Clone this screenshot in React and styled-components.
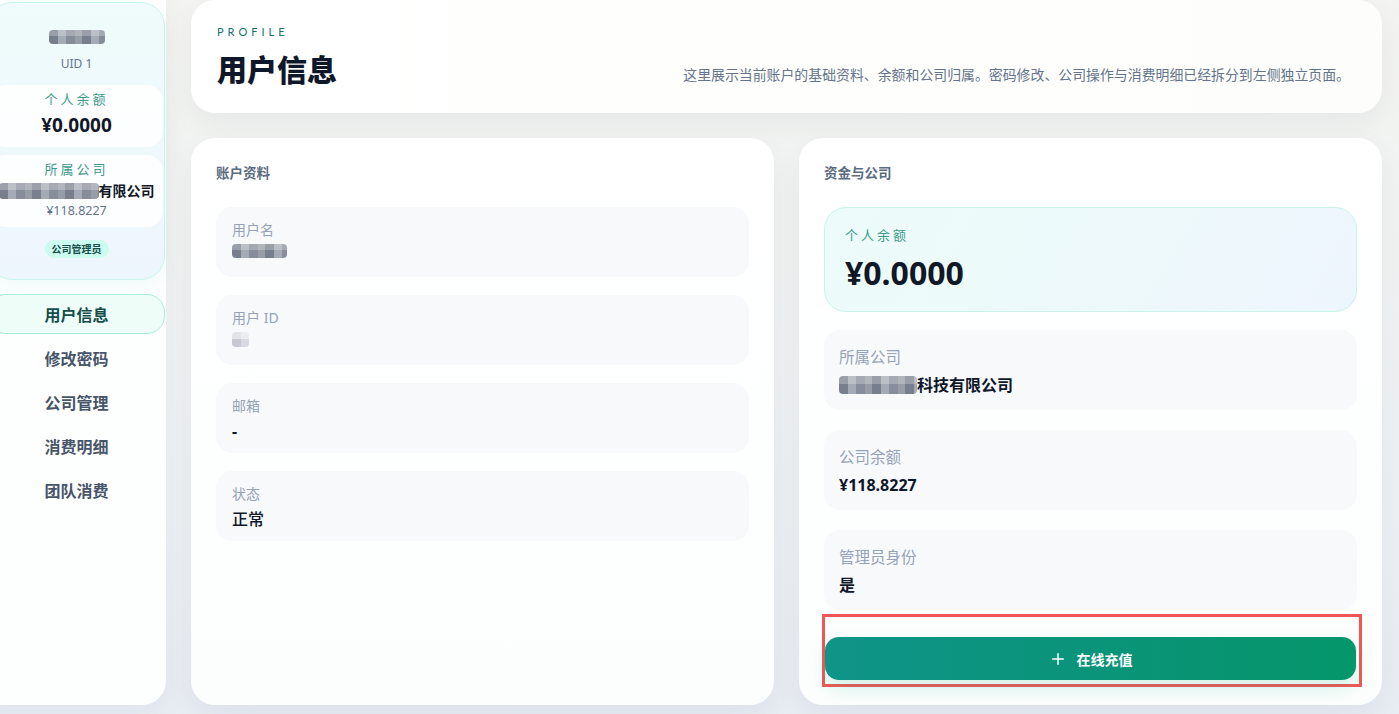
import React from 'react'
import styled, { createGlobalStyle } from 'styled-components'
import { Plus } from 'lucide-react'

const GlobalStyle = createGlobalStyle`
  * { box-sizing: border-box; }
  html, body { margin: 0; padding: 0; }
  body {
    font-family: "Noto Sans", "Noto Sans CJK SC", sans-serif;
    background: linear-gradient(180deg, #f3f4f1 0%, #eef1f3 60%, #e8ecf3 100%);
    color: #0f172a;
    overflow: hidden;
  }
`

const Page = styled.div`
  display: grid;
  grid-template-columns: 166px 1fr;
  column-gap: 25px;
  height: 100vh;
  padding: 0 17px 9px 0;
`

const Sidebar = styled.aside`
  margin: -20px 0 0 -24px;
  padding: 22px 1px 0 12px;
  background: linear-gradient(180deg, #ffffff, #fdfefe);
  border-radius: 0 24px 24px 0;
  box-shadow: 0 10px 30px rgba(15, 23, 42, 0.04);
  display: flex;
  flex-direction: column;
`

const ProfileCard = styled.div`
  border: 1px solid #c9f6ec;
  border-radius: 24px;
  background: linear-gradient(180deg, #effcfb 0%, #eef6fd 100%);
  padding: 27px 1px 21px;
  display: flex;
  flex-direction: column;
  align-items: center;
  box-shadow: 0 8px 20px rgba(20, 184, 166, 0.06);
`

const Redact = styled.span`
  display: inline-block;
  width: ${p => p.$w}px;
  height: ${p => p.$h}px;
  border-radius: 4px;
  flex-shrink: 0;
  background:
    linear-gradient(180deg, rgba(255, 255, 255, ${p => (p.$light ? 0.55 : 0.25)}) 0 45%, transparent 45%),
    repeating-linear-gradient(90deg, #6b7280 0 9px, #9ca3af 9px 17px, #7b8290 17px 26px, #8d939e 26px 33px);
  opacity: ${p => (p.$light ? 0.35 : 0.9)};
`

const Uid = styled.div`
  margin-top: 12px;
  font-size: 12px;
  line-height: 16px;
  color: #64748b;
`

const MiniBox = styled.div`
  align-self: stretch;
  margin-top: ${p => p.$mt}px;
  padding: 6px 0 ${p => p.$pb}px;
  border-radius: 16px;
  background: rgba(255, 255, 255, 0.85);
  display: flex;
  flex-direction: column;
  align-items: center;
`

const MiniLabel = styled.div`
  font-size: 13px;
  line-height: 16px;
  letter-spacing: 3px;
  color: #3d9a8b;
`

const MiniValue = styled.div`
  margin-top: 6px;
  font-size: 19px;
  line-height: 24px;
  font-weight: 700;
  color: #111827;
`

const MiniCompany = styled.div`
  margin-top: 4px;
  display: flex;
  align-items: center;
  font-size: 14px;
  line-height: 20px;
  font-weight: 700;
  color: #111827;
`

const MiniAmount = styled.div`
  margin-top: 1px;
  font-size: 12.5px;
  line-height: 18px;
  color: #64748b;
`

const Badge = styled.div`
  margin-top: 13px;
  padding: 0 7px;
  height: 18px;
  line-height: 18px;
  border-radius: 9px;
  background: #ccfbef;
  color: #134e4a;
  font-size: 10px;
  font-weight: 700;
`

const Nav = styled.nav`
  margin-top: 14px;
  display: flex;
  flex-direction: column;
  gap: 4px;
`

const NavItem = styled.div`
  height: 40px;
  display: flex;
  align-items: center;
  justify-content: center;
  border-radius: 18px;
  font-size: 16px;
  font-weight: 700;
  color: ${p => (p.$active ? '#134e4a' : '#475569')};
  background: ${p => (p.$active ? '#effdf9' : 'transparent')};
  border: 1px solid ${p => (p.$active ? '#a5eedc' : 'transparent')};
`

const Main = styled.main`
  display: grid;
  grid-template-rows: auto 1fr;
  row-gap: 25px;
  min-height: 0;
`

const Header = styled.header`
  height: 113px;
  border-radius: 24px;
  background: linear-gradient(90deg, #ffffff, #fdfdfb);
  box-shadow: 0 10px 30px rgba(15, 23, 42, 0.05);
  padding: 26px 32px 0 26px;
  display: flex;
  justify-content: space-between;
  align-items: flex-start;
`

const Eyebrow = styled.div`
  font-family: Lato, "Noto Sans", sans-serif;
  font-size: 11px;
  line-height: 12px;
  letter-spacing: 4px;
  color: #0f766e;
`

const Title = styled.h1`
  margin: 13px 0 0;
  font-size: 30px;
  line-height: 38px;
  font-weight: 800;
  color: #0f172a;
`

const Desc = styled.p`
  margin: 39px 0 0;
  font-size: 13.9px;
  line-height: 20px;
  color: #64748b;
`

const Cards = styled.div`
  display: grid;
  grid-template-columns: 1fr 1fr;
  column-gap: 25px;
  min-height: 0;
`

const Card = styled.section`
  border-radius: 24px;
  background: linear-gradient(180deg, #ffffff, #fcfefe);
  box-shadow: 0 10px 30px rgba(15, 23, 42, 0.05);
  padding: 25px 25px 18px;
  display: flex;
  flex-direction: column;
`

const CardTitle = styled.h2`
  margin: 0 0 24px;
  font-size: 13.5px;
  line-height: 20px;
  font-weight: 700;
  color: #5b6b80;
`

const Stack = styled.div`
  display: flex;
  flex-direction: column;
  gap: ${p => p.$gap}px;
`

const Field = styled.div`
  border-radius: 16px;
  background: #f8f9fb;
  padding: ${p => (p.$big ? '16px 15px 14px' : '14px 16px 11px')};
  display: flex;
  flex-direction: column;
  gap: ${p => (p.$big ? 6 : 5)}px;
  height: ${p => (p.$big ? 80 : 70)}px;
`

const Label = styled.div`
  font-size: ${p => (p.$big ? 15.5 : 14)}px;
  line-height: ${p => (p.$big ? 22 : 18)}px;
  color: #94a3b8;
`

const Value = styled.div`
  display: flex;
  align-items: center;
  font-size: 16px;
  line-height: 22px;
  font-weight: ${p => (p.$bold ? 700 : 500)};
  color: #0f172a;
`

const BalanceBox = styled.div`
  height: 105px;
  margin-bottom: -2px;
  border: 1px solid #c8f4ea;
  border-radius: 22px;
  background: linear-gradient(120deg, #ecfcf9 0%, #eef6fd 100%);
  padding: 18px 20px;
`

const BalanceLabel = styled.div`
  font-size: 13px;
  line-height: 18px;
  letter-spacing: 3px;
  color: #3d9a8b;
`

const BalanceValue = styled.div`
  margin-top: 9px;
  font-size: 32px;
  line-height: 40px;
  font-weight: 700;
  color: #111827;
`

const RechargeFrame = styled.div`
  margin: 4px -5px 0 -2px;
  border: 3px solid #f05656;
  padding: 20px 3px 4px 0;
`

const RechargeButton = styled.button`
  width: 100%;
  height: 43px;
  border: none;
  border-radius: 14px;
  background: linear-gradient(90deg, #0f9488 0%, #0a9478 55%, #05966a 100%);
  box-shadow: 0 8px 18px rgba(16, 185, 129, 0.18);
  color: #ffffff;
  font-family: inherit;
  font-size: 14px;
  font-weight: 700;
  display: flex;
  align-items: center;
  justify-content: center;
  gap: 10px;
`

const App = () => {
  return (
    <>
      <GlobalStyle />
      <Page>
        <Sidebar>
          <ProfileCard>
            <Redact $w={56} $h={14} />
            <Uid>UID 1</Uid>
            <MiniBox $mt={13} $pb={10}>
              <MiniLabel>个人余额</MiniLabel>
              <MiniValue>¥0.0000</MiniValue>
            </MiniBox>
            <MiniBox $mt={8} $pb={7}>
              <MiniLabel>所属公司</MiniLabel>
              <MiniCompany>
                <Redact $w={100} $h={16} />
                有限公司
              </MiniCompany>
              <MiniAmount>¥118.8227</MiniAmount>
            </MiniBox>
            <Badge>公司管理员</Badge>
          </ProfileCard>
          <Nav>
            <NavItem $active>用户信息</NavItem>
            <NavItem>修改密码</NavItem>
            <NavItem>公司管理</NavItem>
            <NavItem>消费明细</NavItem>
            <NavItem>团队消费</NavItem>
          </Nav>
        </Sidebar>

        <Main>
          <Header>
            <div>
              <Eyebrow>PROFILE</Eyebrow>
              <Title>用户信息</Title>
            </div>
            <Desc>这里展示当前账户的基础资料、余额和公司归属。密码修改、公司操作与消费明细已经拆分到左侧独立页面。</Desc>
          </Header>

          <Cards>
            <Card>
              <CardTitle>账户资料</CardTitle>
              <Stack $gap={18}>
                <Field>
                  <Label>用户名</Label>
                  <Value><Redact $w={55} $h={14} /></Value>
                </Field>
                <Field>
                  <Label>用户 ID</Label>
                  <Value><Redact $w={17} $h={15} $light /></Value>
                </Field>
                <Field>
                  <Label>邮箱</Label>
                  <Value $bold>-</Value>
                </Field>
                <Field>
                  <Label>状态</Label>
                  <Value>正常</Value>
                </Field>
              </Stack>
            </Card>

            <Card>
              <CardTitle>资金与公司</CardTitle>
              <Stack $gap={20}>
                <BalanceBox>
                  <BalanceLabel>个人余额</BalanceLabel>
                  <BalanceValue>¥0.0000</BalanceValue>
                </BalanceBox>
                <Field $big>
                  <Label $big>所属公司</Label>
                  <Value $bold><Redact $w={78} $h={18} />科技有限公司</Value>
                </Field>
                <Field $big>
                  <Label $big>公司余额</Label>
                  <Value $bold>¥118.8227</Value>
                </Field>
                <Field $big>
                  <Label $big>管理员身份</Label>
                  <Value $bold>是</Value>
                </Field>
              </Stack>
              <RechargeFrame>
                <RechargeButton>
                  <Plus size={18} strokeWidth={2} />
                  在线充值
                </RechargeButton>
              </RechargeFrame>
            </Card>
          </Cards>
        </Main>
      </Page>
    </>
  )
}

export default App
